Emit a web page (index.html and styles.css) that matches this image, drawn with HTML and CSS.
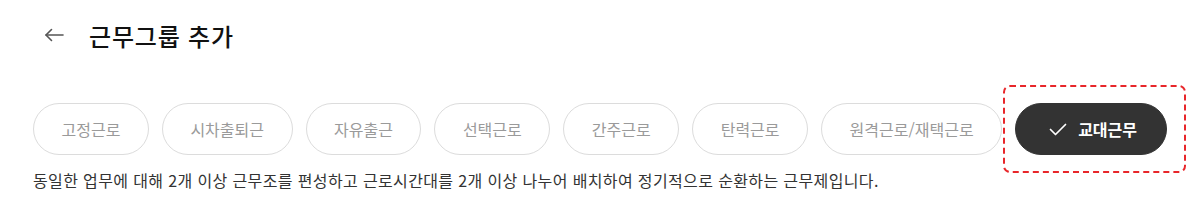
FILE: index.html
```html
<!DOCTYPE html>
<html lang="ko">
<head>
  <meta charset="UTF-8">
  <meta name="viewport" content="width=device-width, initial-scale=1.0">
  <title>근무그룹 추가</title>
  <link rel="stylesheet" href="styles.css">
</head>
<body>
  <div class="header">
    <button class="back" aria-label="뒤로">
      <svg width="20" height="14" viewBox="0 0 20 14" fill="none" stroke="#555" stroke-width="1.6" stroke-linecap="round" stroke-linejoin="round">
        <path d="M19 7H2"/>
        <path d="M7.5 1.5L2 7l5.5 5.5"/>
      </svg>
    </button>
    <h1 class="title">근무그룹 추가</h1>
  </div>

  <div class="types">
    <button class="pill">고정근로</button>
    <button class="pill">시차출퇴근</button>
    <button class="pill">자유출근</button>
    <button class="pill">선택근로</button>
    <button class="pill">간주근로</button>
    <button class="pill">탄력근로</button>
    <button class="pill">원격근로/재택근로</button>
    <button class="pill selected">
      <svg width="18" height="13" viewBox="0 0 18 13" fill="none" stroke="#fff" stroke-width="1.7" stroke-linecap="round" stroke-linejoin="round">
        <path d="M1.5 6.5l5 5L16.5 1.5"/>
      </svg>
      교대근무
      <span class="focus"></span>
    </button>
  </div>

  <p class="desc">동일한 업무에 대해 2개 이상 근무조를 편성하고 근로시간대를 2개 이상 나누어 배치하여 정기적으로 순환하는 근무제입니다.</p>
</body>
</html>
```

FILE: styles.css
```css
* {
  box-sizing: border-box;
  font-family: 'Noto Sans CJK KR', 'Noto Sans', sans-serif;
}

body {
  margin: 0;
  padding: 15px 0 0 33px;
  background: #fff;
  color: #222;
}

.header {
  display: flex;
  align-items: center;
  height: 40px;
}

.back {
  display: flex;
  align-items: center;
  padding: 0;
  margin-left: 11px;
  border: none;
  background: none;
  cursor: pointer;
}

.title {
  margin: 0 0 0 25px;
  font-size: 24px;
  font-weight: 500;
  color: #111;
  letter-spacing: 0.8px;
}

.types {
  display: flex;
  gap: 13px;
  margin-top: 48px;
}

.pill {
  position: relative;
  display: flex;
  align-items: center;
  justify-content: center;
  height: 52px;
  padding: 0 27.5px;
  border: 1.5px solid #dcdcdc;
  border-radius: 26px;
  background: #fff;
  color: #9a9a9a;
  font-size: 16px;
  white-space: nowrap;
  cursor: pointer;
}

.pill.selected {
  gap: 11px;
  padding: 0 29px 0 33px;
  border-color: #333;
  background: #333;
  color: #fff;
  font-weight: 700;
}

.focus {
  position: absolute;
  top: -19px;
  bottom: -19px;
  left: -13px;
  right: -20px;
  border: 2px dashed #e8262a;
  border-radius: 7px;
  pointer-events: none;
}

.desc {
  margin: 13px 0 0;
  font-size: 16px;
  letter-spacing: 0.37px;
  color: #333;
}
```
